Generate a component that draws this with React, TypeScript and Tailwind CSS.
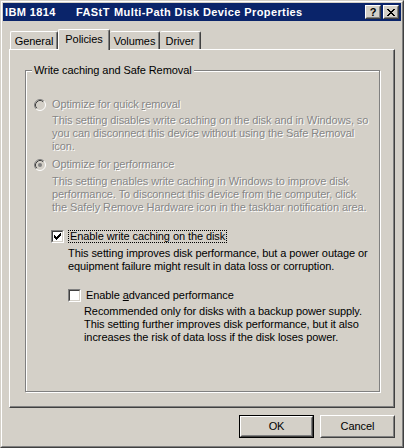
import React from "react";

function Radio({ checked }: { checked?: boolean }) {
  return (
    <svg width="12" height="12" viewBox="0 0 12 12" className="shrink-0">
      <circle cx="6" cy="6" r="5.5" fill="#d4d0c8" />
      <path d="M2.11 9.89 A5.5 5.5 0 0 1 9.89 2.11" stroke="#808080" strokeWidth="1" fill="none" />
      <path d="M9.89 2.11 A5.5 5.5 0 0 1 2.11 9.89" stroke="#ffffff" strokeWidth="1" fill="none" />
      <path d="M2.82 9.18 A4.5 4.5 0 0 1 9.18 2.82" stroke="#404040" strokeWidth="1" fill="none" />
      {checked && <circle cx="6" cy="6" r="2" fill="#808080" />}
    </svg>
  );
}

function Check({ checked }: { checked?: boolean }) {
  return (
    <div className="w-[13px] h-[13px] shrink-0 border border-t-[#808080] border-l-[#808080] border-r-white border-b-white">
      <div className="w-full h-full bg-white border border-t-[#404040] border-l-[#404040] border-r-[#d4d0c8] border-b-[#d4d0c8] flex items-center justify-center">
        {checked && (
          <svg width="7" height="7" viewBox="0 0 7 7">
            <path d="M0 2h1v1h1v1h1v-1h1v-1h1v-1h1v-1h1v3h-1v1h-1v1h-1v1h-1v1h-1v-1h-1v-1h-1z" fill="#000" />
          </svg>
        )}
      </div>
    </div>
  );
}

function Raised({ children, className }: { children?: React.ReactNode; className?: string }) {
  return (
    <div className={"border border-t-white border-l-white border-r-[#404040] border-b-[#404040] " + (className || "")}>
      <div className="w-full h-full border border-t-[#d4d0c8] border-l-[#d4d0c8] border-r-[#808080] border-b-[#808080] flex items-center justify-center">
        {children}
      </div>
    </div>
  );
}

const dis = "text-[#868686] [text-shadow:1px_1px_0_#ffffff]";

export default function App() {
  return (
    <div className="w-[404px] h-[448px] bg-[#d4d0c8] font-['Liberation_Sans',Arial,sans-serif] text-[11px] leading-[13px] tracking-[-0.08px] text-black">
      <div className="w-full h-full border border-t-[#d4d0c8] border-l-[#d4d0c8] border-r-[#404040] border-b-[#404040]">
        <div className="w-full h-full border border-t-white border-l-white border-r-[#808080] border-b-[#808080] p-px flex flex-col">
          {/* Title bar */}
          <div className="h-[18px] bg-[#0a246a] flex items-center pl-[2px] pr-[2px] text-white font-bold tracking-[0.4px]">
            <span className="w-[71px] whitespace-nowrap">IBM 1814</span>
            <span className="w-[38px] whitespace-nowrap">FAStT</span>
            <span className="whitespace-nowrap">Multi-Path Disk Device Properties</span>
            <div className="ml-auto flex gap-[2px] tracking-normal">
              <Raised className="w-[16px] h-[14px] bg-[#d4d0c8]">
                <span className="text-black font-bold text-[11px] leading-[10px]">?</span>
              </Raised>
              <Raised className="w-[16px] h-[14px] bg-[#d4d0c8]">
                <svg width="8" height="7" viewBox="0 0 8 7">
                  <path d="M0 0h2v1h1v1h2v-1h1v-1h2v1h-1v1h-1v1h-1v1h1v1h1v1h1v1h-2v-1h-1v-1h-2v1h-1v1h-2v-1h1v-1h1v-1h1v-1h-1v-1h-1v-1h-1z" fill="#000" />
                </svg>
              </Raised>
            </div>
          </div>

          {/* Tabs */}
          <div className="h-[28px] flex items-end pl-[6px]">
            <div className="h-[18px] w-[48px] ml-px border-t border-l border-white border-r border-r-[#404040] shadow-[inset_-1px_0_0_#808080] rounded-t-[2px] flex items-center justify-center pt-[1px]">
              General
            </div>
            <div className="relative z-10 -mb-px h-[21px] w-[52px] bg-[#d4d0c8] border-t border-l border-white border-r border-r-[#404040] shadow-[inset_-1px_0_0_#808080] rounded-t-[2px] flex items-start justify-center pt-[3px]">
              Policies
            </div>
            <div className="h-[18px] w-[50px] border-t border-white border-r border-r-[#404040] shadow-[inset_-1px_0_0_#808080] rounded-t-[2px] flex items-center justify-center pt-[1px]">
              Volumes
            </div>
            <div className="h-[18px] w-[41px] border-t border-white border-r border-r-[#404040] shadow-[inset_-1px_0_0_#808080] rounded-t-[2px] flex items-center justify-center pt-[1px]">
              Driver
            </div>
          </div>

          {/* Panel */}
          <div className="mx-[6px] h-[359px] border border-t-white border-l-white border-r-[#404040] border-b-[#404040] shadow-[inset_-1px_-1px_0_#808080] pl-[15px] pr-[14px] pt-[20px]">
            <div className="h-[322px] border border-[#808080] shadow-[1px_1px_0_#ffffff,inset_1px_1px_0_#ffffff] flex flex-col">
              <div className="-mt-[7px] ml-[6px] px-[2px] self-start bg-[#d4d0c8] h-[13px] whitespace-nowrap">
                Write caching and Safe Removal
              </div>

              {/* radio 1 */}
              <div className="mt-[21px] ml-[8px] flex items-center gap-[6px] h-[13px]">
                <Radio />
                <span className={dis}>
                  Optimize for quick <u>r</u>emoval
                </span>
              </div>
              <div className={"ml-[26px] mt-[3px] whitespace-nowrap " + dis}>
                This setting disables write caching on the disk and in Windows, so<br />
                you can disconnect this device without using the Safe Removal<br />
                icon.
              </div>

              {/* radio 2 */}
              <div className="mt-[5px] ml-[8px] flex items-center gap-[6px] h-[13px]">
                <Radio checked />
                <span className={dis}>
                  Optimize for <u>p</u>erformance
                </span>
              </div>
              <div className={"ml-[26px] mt-[4px] whitespace-nowrap " + dis}>
                This setting enables write caching in Windows to improve disk<br />
                performance. To disconnect this device from the computer, click<br />
                the Safely Remove Hardware icon in the taskbar notification area.
              </div>

              {/* checkbox 1 */}
              <div className="mt-[16px] ml-[25px] flex items-center gap-[4px] h-[13px]">
                <Check checked />
                <span className="border border-dotted border-black px-px leading-[11px] h-[13px] whitespace-nowrap">
                  Enable write caching on the disk
                </span>
              </div>
              <div className="ml-[42px] mt-[4px] whitespace-nowrap">
                This setting improves disk performance, but a power outage or<br />
                equipment failure might result in data loss or corruption.
              </div>

              {/* checkbox 2 */}
              <div className="mt-[16px] ml-[42px] flex items-center gap-[5px] h-[13px]">
                <Check />
                <span className="whitespace-nowrap">
                  Enable <u>a</u>dvanced performance
                </span>
              </div>
              <div className="ml-[58px] mt-[3px] whitespace-nowrap">
                Recommended only for disks with a backup power supply.<br />
                This setting further improves disk performance, but it also<br />
                increases the risk of data loss if the disk loses power.
              </div>
            </div>
          </div>

          {/* Buttons */}
          <div className="mt-[7px] h-[23px] flex justify-end gap-[6px] pr-[6px]">
            <div className="w-[75px] h-[23px] border border-black">
              <Raised className="w-full h-full">OK</Raised>
            </div>
            <Raised className="w-[75px] h-[23px]">Cancel</Raised>
          </div>
        </div>
      </div>
    </div>
  );
}
